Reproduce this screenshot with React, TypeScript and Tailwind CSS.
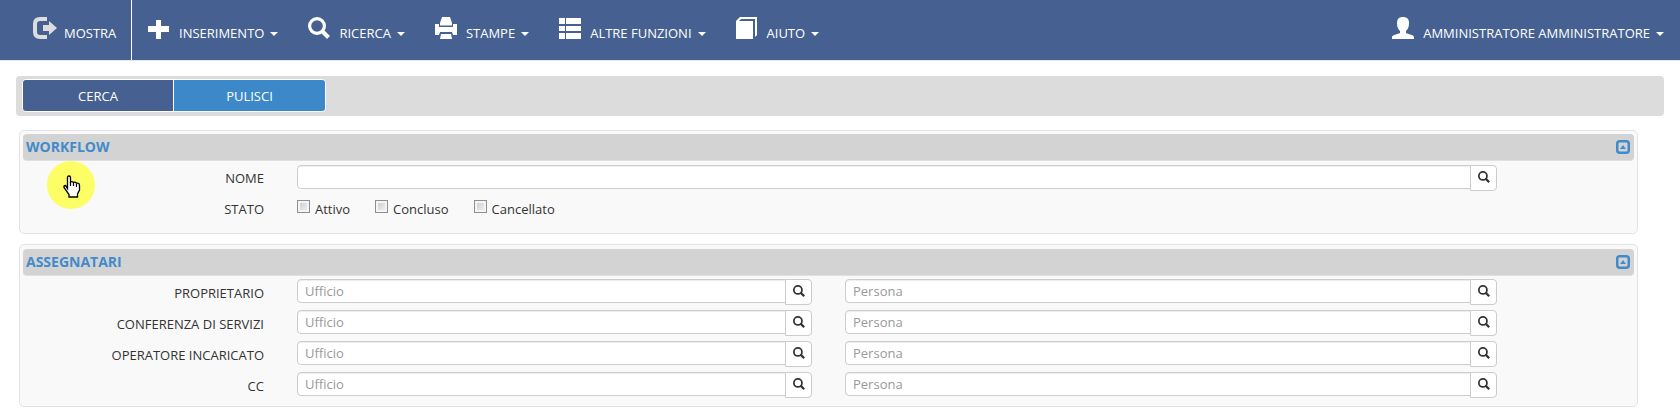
import React from "react";

type IconProps = { className?: string };

const LogoutIcon: React.FC<IconProps> = ({ className }) => (
  <svg viewBox="0 0 24 22" className={className} fill="none" aria-hidden="true">
    <path d="M14 2H7Q2 2 2 7v8q0 5 5 5h7" stroke="currentColor" strokeWidth="4" />
    <path d="M10 8h6V4l8 7-8 7v-4h-6z" fill="currentColor" />
  </svg>
);

const PlusIcon: React.FC<IconProps> = ({ className }) => (
  <svg viewBox="0 0 22 22" className={className} fill="currentColor" aria-hidden="true">
    <path d="M8 3h5v6h8v6h-8v7H8v-7H0V9h8z" />
  </svg>
);

const SearchIcon: React.FC<IconProps> = ({ className }) => (
  <svg viewBox="0 0 22 22" className={className} fill="none" stroke="currentColor" aria-hidden="true">
    <circle cx="9" cy="9" r="7.4" strokeWidth="3.2" />
    <path d="M14 14l6.5 6.5" strokeWidth="4" />
  </svg>
);

const PrintIcon: React.FC<IconProps> = ({ className }) => (
  <svg viewBox="0 0 22 22" className={className} fill="currentColor" aria-hidden="true">
    <path d="M7 0h8l2 6v2.500H5V6z" />
    <path d="M0 7h4v3h14V7h4v11h-4l-1-3H5l-1 3H0z" />
    <path d="M6 17h10l1 5H5z" />
  </svg>
);

const ListIcon: React.FC<IconProps> = ({ className }) => (
  <svg viewBox="0 0 22 22" className={className} fill="currentColor" aria-hidden="true">
    <path d="M0 1h6v6H0zM7 1h15v6H7zM0 9h6v5H0zM7 9h15v5H7zM0 16h6v6H0zM7 16h15v6H7z" />
  </svg>
);

const BookIcon: React.FC<IconProps> = ({ className }) => (
  <svg viewBox="0 0 22 22" className={className} fill="currentColor" aria-hidden="true">
    <path d="M0 4l4-4h17v18l-2 2V2H5L3 4h14v18H0z" />
  </svg>
);

const UserIcon: React.FC<IconProps> = ({ className }) => (
  <svg viewBox="0 0 22 22" className={className} fill="currentColor" aria-hidden="true">
    <path d="M11 0c4 0 6 2 6 6 0 4-1 6-3 8v2c2 1 8 2 8 4v2H0v-2c0-2 6-3 8-4v-2c-2-2-3-4-3-8 0-4 2-6 6-6z" />
  </svg>
);

const CollapseIcon: React.FC<IconProps> = ({ className }) => (
  <svg viewBox="0 0 14 14" className={className} aria-hidden="true">
    <rect x="1.25" y="1.25" width="11.5" height="11.5" rx="2.5" fill="none" stroke="currentColor" strokeWidth="2.5" />
    <path d="M4 9h6L7 5z" fill="currentColor" />
  </svg>
);

const HandCursor: React.FC<IconProps> = ({ className }) => (
  <svg viewBox="0 0 18 23" className={className} aria-hidden="true">
    <path
      d="M4.500 13.500V2.500Q4.500 1 6 1t1.500 1.500V7q1.500-1 3 .5 1.500-1 3 .7 3-.5 3 2.300v4.500l-2 4v3H6v-2.500L1 12.500q-.5-2 1.500-2z"
      fill="#fff"
      stroke="#000"
      strokeWidth="1.300"
    />
    <path d="M7.500 7v4M10.500 8v3M13.500 9v3" stroke="#000" strokeWidth="1.200" />
  </svg>
);

const menuItems = [
  { label: "INSERIMENTO", Icon: PlusIcon },
  { label: "RICERCA", Icon: SearchIcon },
  { label: "STAMPE", Icon: PrintIcon },
  { label: "ALTRE FUNZIONI", Icon: ListIcon },
  { label: "AIUTO", Icon: BookIcon },
];

const states = ["Attivo", "Concluso", "Cancellato"];

const assignees = [
  { id: "proprietario", label: "PROPRIETARIO" },
  { id: "conferenza", label: "CONFERENZA DI SERVIZI" },
  { id: "operatore", label: "OPERATORE INCARICATO" },
  { id: "cc", label: "CC" },
];

const Caret: React.FC = () => (
  <span className="mt-2 ml-[6px] border-x-4 border-t-4 border-x-transparent border-t-white" />
);

type MenuButtonProps = { label: string; Icon: React.FC<IconProps> };

const MenuButton: React.FC<MenuButtonProps> = ({ label, Icon }) => (
  <button type="button" className="flex h-[60px] items-center whitespace-nowrap" aria-haspopup="menu">
    <Icon className="mr-[9px] mb-1 h-[22px] w-[22px] shrink-0" />
    <span className="mt-[6px]">{label}</span>
    <Caret />
  </button>
);

type SearchFieldProps = {
  id: string;
  label?: string;
  placeholder?: string;
  className?: string;
};

const SearchField: React.FC<SearchFieldProps> = ({ id, label, placeholder, className = "" }) => (
  <div className={`flex items-start ${className}`}>
    <input
      id={id}
      type="text"
      aria-label={label}
      placeholder={placeholder}
      className="h-6 min-w-0 flex-1 rounded-l border border-[#ccc] bg-white px-[7px] shadow-[inset_0_1px_1px_rgba(0,0,0,0.075)] outline-none placeholder:text-[#999]"
    />
    <button
      type="button"
      aria-label="Cerca"
      className="-ml-px flex h-[26px] w-[27px] justify-center rounded-r border border-[#ccc] bg-white pt-[5px] pl-px text-[#333]"
    >
      <SearchIcon className="h-3 w-3" />
    </button>
  </div>
);

type PanelProps = { title: string; className: string; children: React.ReactNode };

const Panel: React.FC<PanelProps> = ({ title, className, children }) => (
  <section className={`relative mr-[42px] ml-[19px] rounded-[5px] border border-[#e3e3e3] bg-[#f9f9f9] ${className}`}>
    <div className="mx-[3px] flex h-[27px] items-center justify-between rounded border-b border-[#e0e0e0] bg-[#d3d3d3] pr-1 pl-[3px] text-[#428bca]">
      <h2 className="text-sm font-bold">{title}</h2>
      <button type="button" aria-label={`Comprimi ${title}`}>
        <CollapseIcon className="h-[14px] w-[14px]" />
      </button>
    </div>
    {children}
  </section>
);

const rowClass = "grid h-[31px] grid-cols-[244fr_515fr_652fr_107fr] items-start gap-x-[33px]";

const App: React.FC = () => {
  return (
    <div className="bg-white font-['Open_Sans',sans-serif] text-[13px] leading-5 text-[#333]">
      {/* Navbar */}
      <nav className="flex border-b border-[#e7e7e7] bg-[#466191] text-white">
        <button type="button" className="flex h-[60px] w-[132px] items-center border-r border-white pl-[33px]">
          <LogoutIcon className="mr-[7px] mb-1 h-[22px] w-6 text-[#ddd]" />
          <span className="mt-[6px]">MOSTRA</span>
        </button>
        <div className="flex flex-1 gap-[30px] pl-4">
          {menuItems.map((item) => (
            <MenuButton key={item.label} label={item.label} Icon={item.Icon} />
          ))}
        </div>
        <div className="pr-4">
          <MenuButton label="AMMINISTRATORE AMMINISTRATORE" Icon={UserIcon} />
        </div>
      </nav>

      {/* Toolbar */}
      <div className="mx-4 mt-[15px] flex h-10 items-start rounded bg-[#dcdcdc] pt-[3px] pl-[6px]">
        <div className="flex h-[33px] overflow-hidden rounded border border-white text-white">
          <button type="button" className="w-[151px] border-r border-white bg-[#466191]">
            CERCA
          </button>
          <button type="button" className="w-[151px] bg-[#3d88c8]">
            PULISCI
          </button>
        </div>
      </div>

      <Panel title="WORKFLOW" className="mt-[14px] h-[104px] pt-[3px]">
        <div className="pt-1">
          <div className={rowClass}>
            <label htmlFor="nome" className="pt-[3px] text-right">
              NOME
            </label>
            <SearchField id="nome" className="col-span-2" />
          </div>
          <div className={rowClass} role="group" aria-labelledby="stato">
            <span id="stato" className="pt-[3px] text-right">
              STATO
            </span>
            <div className="col-span-2 flex gap-[25px]">
              {states.map((state) => (
                <label key={state} className="flex items-start">
                  <input
                    type="checkbox"
                    className="mt-1 mr-[5px] h-[13px] w-[13px] appearance-none border border-[#8e8f8f] bg-linear-to-br from-[#c5c8cf] to-[#f6f6f6] shadow-[inset_0_0_0_2px_#f4f4f4]"
                  />
                  <span className="pt-[3px]">{state}</span>
                </label>
              ))}
            </div>
          </div>
        </div>
        {/* Pointer highlight */}
        <div className="pointer-events-none absolute top-[30px] left-[27px] flex h-12 w-12 items-center justify-center rounded-full bg-[#fdfd66]">
          <HandCursor className="mt-[3px] ml-0.5 h-[23px] w-[18px]" />
        </div>
      </Panel>

      <Panel title="ASSEGNATARI" className="mt-[10px] h-[163px] pt-1">
        <div className="pt-[3px]">
          {assignees.map((row) => (
            <div key={row.id} className={rowClass}>
              <label htmlFor={`${row.id}-ufficio`} className="pt-1 text-right">
                {row.label}
              </label>
              <SearchField id={`${row.id}-ufficio`} placeholder="Ufficio" />
              <SearchField id={`${row.id}-persona`} label={`${row.label} persona`} placeholder="Persona" />
            </div>
          ))}
        </div>
      </Panel>
    </div>
  );
};

export default App;
